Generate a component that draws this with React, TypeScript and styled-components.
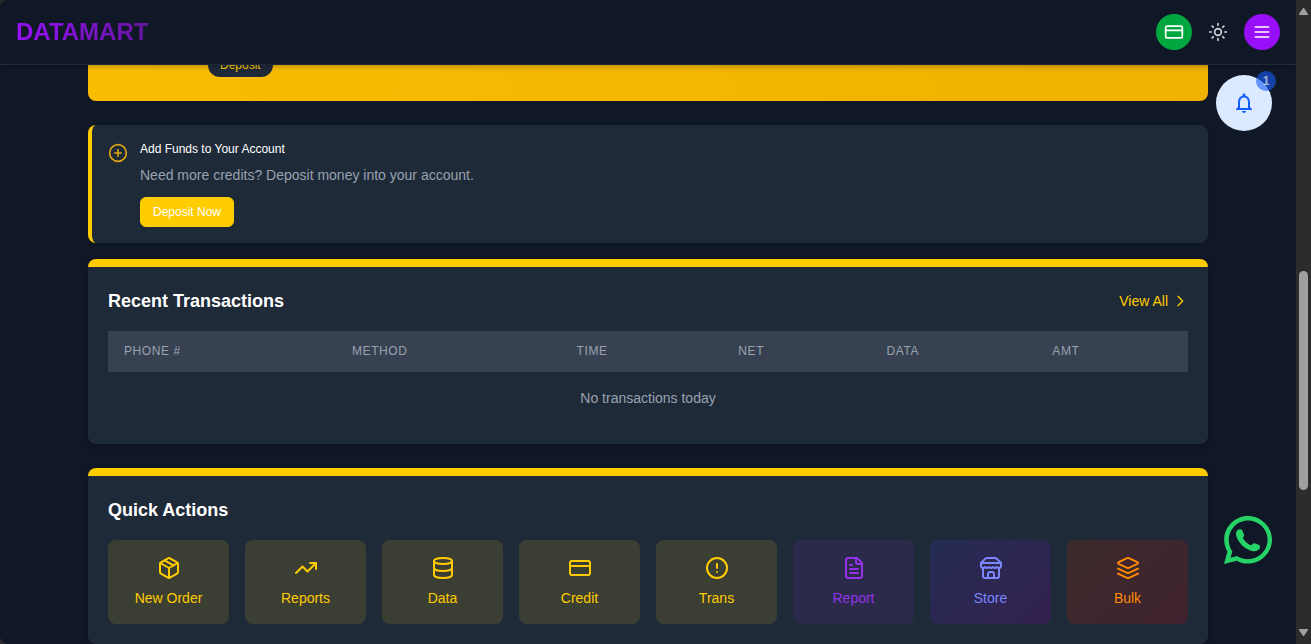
import React from "react";
import type { ReactNode } from "react";
import styled, { createGlobalStyle } from "styled-components";
import {
  CircleAlert,
  CirclePlus,
  CreditCard,
  Database,
  Package,
  Sun,
  TrendingUp,
} from "lucide-react";

const GlobalStyle = createGlobalStyle`
  *, *::before, *::after { box-sizing: border-box; }
  body {
    margin: 0;
    background: #2c2c2c;
    color: #ffffff;
    font-family: "Liberation Sans", Arial, sans-serif;
    font-size: 14px;
    line-height: 20px;
  }
  h1, h2, h3, p { margin: 0; }
  button { font-family: inherit; cursor: pointer; }
  a { color: inherit; text-decoration: none; }
`;

const Shell = styled.div`
  display: grid;
  grid-template-columns: minmax(0, 1fr) 15px;
  height: 100vh;
  overflow: hidden;
`;

const Page = styled.div`
  position: relative;
  display: flex;
  flex-direction: column;
  min-height: 0;
  overflow: hidden;
  background: #101726;
  border-radius: 8px 0 0 8px;
`;

const Header = styled.header`
  position: relative;
  z-index: 2;
  flex: none;
  display: flex;
  align-items: center;
  justify-content: space-between;
  padding: 14px 16px;
  background: #101726;
  border-bottom: 1px solid #1e2939;
  box-shadow: 0 1px 6px rgba(0, 0, 0, 0.3);
`;

const Brand = styled.h1`
  font-size: 24px;
  line-height: 32px;
  font-weight: 700;
  color: transparent;
  background: linear-gradient(90deg, #9810fa, #6516a0);
  background-clip: text;
  -webkit-background-clip: text;
`;

const HeaderActions = styled.div`
  display: flex;
  align-items: center;
  gap: 8px;
`;

const RoundButton = styled.button<{ $fill?: string; $color?: string }>`
  display: grid;
  place-items: center;
  width: 36px;
  height: 36px;
  padding: 0;
  border: 0;
  border-radius: 50%;
  background: ${(p) => p.$fill ?? "transparent"};
  color: ${(p) => p.$color ?? "#ffffff"};
`;

const Content = styled.main`
  flex: 1;
  min-height: 0;
  width: 100%;
  max-width: 1152px;
  margin: 0 auto;
  padding: 0 16px;
`;

const Banner = styled.section`
  display: flex;
  align-items: flex-end;
  height: 36px;
  margin-bottom: 24px;
  padding: 0 120px 24px;
  border-radius: 0 0 8px 8px;
  background: linear-gradient(110deg, #fabd02, #f0b100);
  overflow: hidden;
`;

const BannerButton = styled.button`
  flex: none;
  padding: 4px 12px;
  border: 0;
  border-radius: 12px;
  background: #1e2939;
  color: #ffcc00;
  font-size: 12px;
  line-height: 16px;
`;

const Notice = styled.section`
  display: flex;
  gap: 12px;
  margin-bottom: 16px;
  padding: 16px;
  border-left: 4px solid #ffcc00;
  border-radius: 8px;
  background: #1f2a39;
  box-shadow: 0 1px 3px rgba(0, 0, 0, 0.2);
`;

const NoticeIcon = styled(CirclePlus)`
  flex: none;
  margin-top: 2px;
  color: #dba511;
`;

const NoticeTitle = styled.h3`
  font-size: 12px;
  line-height: 16px;
  font-weight: 500;
`;

const NoticeText = styled.p`
  margin: 8px 0 12px;
  color: #99a1af;
`;

const DepositButton = styled.button`
  display: block;
  padding: 6px 12px;
  border: 1px solid #ffcc00;
  border-radius: 6px;
  background: #ffcc00;
  color: #ffffff;
  font-size: 12px;
  line-height: 16px;
  font-weight: 500;
`;

const Card = styled.section`
  margin-bottom: 24px;
  padding: 28px 20px 20px;
  border-radius: 8px;
  background: linear-gradient(#ffcc00 0 8px, #1f2a39 8px);
  box-shadow: 0 2px 6px rgba(0, 0, 0, 0.2);
`;

const CardHeader = styled.div`
  display: flex;
  align-items: center;
  justify-content: space-between;
  margin-bottom: 16px;
`;

const CardTitle = styled.h2`
  font-size: 18px;
  line-height: 28px;
  font-weight: 700;
`;

const ViewAll = styled.a`
  display: flex;
  align-items: center;
  gap: 4px;
  color: #ffcc00;
`;

const Table = styled.table`
  width: 100%;
  border-collapse: collapse;
`;

const HeadRow = styled.tr`
  background: #374151;
  border-bottom: 1px solid #374151;
`;

const HeadCell = styled.th`
  padding: 12px 16px;
  color: #99a1af;
  font-size: 12px;
  line-height: 16px;
  font-weight: 500;
  letter-spacing: 0.05em;
  text-align: left;
  text-transform: uppercase;
`;

const EmptyCell = styled.td`
  padding: 16px;
  color: #99a1af;
  text-align: center;
`;

const ActionGrid = styled.div`
  display: grid;
  grid-template-columns: repeat(8, minmax(0, 1fr));
  gap: 16px;
`;

const ActionTile = styled.button<{ $fill: string; $color: string }>`
  display: flex;
  flex-direction: column;
  align-items: center;
  gap: 8px;
  padding: 16px;
  border: 0;
  border-radius: 8px;
  background: ${(p) => p.$fill};
  color: ${(p) => p.$color};
  font-size: 14px;
  line-height: 20px;
  font-weight: 500;
  white-space: nowrap;
`;

const Notifications = styled.button`
  position: absolute;
  z-index: 3;
  top: 75px;
  right: 24px;
  display: grid;
  place-items: center;
  width: 56px;
  height: 56px;
  padding: 0;
  border: 0;
  border-radius: 50%;
  background: #dbeafe;
  color: #155dfc;
`;

const Count = styled.span`
  position: absolute;
  top: -4px;
  right: -4px;
  width: 20px;
  height: 20px;
  border-radius: 50%;
  background: rgba(21, 93, 252, 0.6);
  color: rgba(255, 255, 255, 0.6);
  font-size: 12px;
  line-height: 20px;
  font-weight: 700;
  text-align: center;
`;

const ChatLink = styled.a`
  position: absolute;
  right: 24px;
  bottom: 80px;
  display: block;
  width: 48px;
  height: 48px;
  color: #25d366;
`;

const Scrollbar = styled.div`
  display: flex;
  flex-direction: column;
  align-items: center;
  padding: 8px 0;
  background: #2c2c2c;
`;

const Track = styled.div`
  flex: 1;
  display: flex;
  flex-direction: column;
  align-items: center;
`;

const Gap = styled.div<{ $grow: number }>`
  flex: ${(p) => p.$grow} 1 0;
`;

const Thumb = styled.div`
  flex: 219 1 0;
  width: 9px;
  border-radius: 5px;
  background: #9f9f9f;
`;

const Arrow = styled.svg`
  display: block;
  width: 9px;
  height: 7px;
  fill: #9f9f9f;
`;

function LineIcon({ size, children }: { size: number; children: ReactNode }) {
  return (
    <svg
      width={size}
      height={size}
      viewBox="0 0 24 24"
      fill="none"
      stroke="currentColor"
      strokeWidth={2}
      strokeLinecap="round"
      strokeLinejoin="round"
      aria-hidden="true"
    >
      {children}
    </svg>
  );
}

const MenuIcon = () => (
  <LineIcon size={20}>
    <path d="M4 6h16M4 12h16M4 18h16" />
  </LineIcon>
);

const ChevronIcon = () => (
  <LineIcon size={16}>
    <path d="M9 5l7 7-7 7" />
  </LineIcon>
);

const ReportIcon = () => (
  <LineIcon size={24}>
    <path d="M15 2H6a2 2 0 0 0-2 2v16a2 2 0 0 0 2 2h12a2 2 0 0 0 2-2V7Z" />
    <path d="M14 2v4a2 2 0 0 0 2 2h4" />
    <path d="M10 9H8M16 13H8M16 17H8" />
  </LineIcon>
);

const StoreIcon = () => (
  <LineIcon size={24}>
    <path d="m2 7 4.410-4.410A2 2 0 0 1 7.830 2h8.340a2 2 0 0 1 1.420.590L22 7" />
    <path d="M4 12v8a2 2 0 0 0 2 2h12a2 2 0 0 0 2-2v-8" />
    <path d="M15 22v-4a2 2 0 0 0-2-2h-2a2 2 0 0 0-2 2v4" />
    <path d="M2 7h20" />
    <path d="M22 7v3a2 2 0 0 1-2 2a2.700 2.700 0 0 1-1.590-.63.7.7 0 0 0-.82 0A2.700 2.700 0 0 1 16 12a2.700 2.700 0 0 1-1.590-.63.7.7 0 0 0-.82 0A2.700 2.700 0 0 1 12 12a2.700 2.700 0 0 1-1.590-.63.7.7 0 0 0-.82 0A2.700 2.700 0 0 1 8 12a2.700 2.700 0 0 1-1.590-.63.7.7 0 0 0-.82 0A2.700 2.700 0 0 1 4 12a2 2 0 0 1-2-2V7" />
  </LineIcon>
);

const LayersIcon = () => (
  <LineIcon size={24}>
    <path d="m12.830 2.180a2 2 0 0 0-1.660 0L2.600 6.080a1 1 0 0 0 0 1.830l8.580 3.910a2 2 0 0 0 1.660 0l8.580-3.900a1 1 0 0 0 0-1.830Z" />
    <path d="m22 17.650-9.170 4.160a2 2 0 0 1-1.660 0L2 17.650" />
    <path d="m22 12.650-9.170 4.160a2 2 0 0 1-1.660 0L2 12.650" />
  </LineIcon>
);

const BellIcon = () => (
  <svg width="24" height="24" viewBox="0 0 24 24" fill="currentColor" aria-hidden="true">
    <path d="M12 22c1.100 0 2-.9 2-2h-4c0 1.100.9 2 2 2zm6-6v-5c0-3.070-1.630-5.640-4.500-6.320V4c0-.83-.67-1.500-1.500-1.500s-1.500.67-1.500 1.500v.68C7.640 5.360 6 7.920 6 11v5l-2 2v1h16v-1l-2-2zm-2 1H8v-6c0-2.480 1.510-4.500 4-4.500s4 2.020 4 4.500v6z" />
  </svg>
);

const WhatsAppIcon = () => (
  <svg viewBox="0 0 48 48" width="48" height="48" fill="currentColor" aria-hidden="true">
    <path
      fillRule="evenodd"
      d="M40.800 7C36.300 2.500 30.400 0 24 0 10.900 0 .2 10.700.2 23.800c0 4.200 1.100 8.300 3.200 11.900L0 48l12.600-3.300c3.500 1.900 7.400 2.900 11.400 2.900C37.100 47.600 48 36.900 48 23.800 48 17.400 45.300 11.500 40.800 7zM24 43.200c-3.600 0-7-.9-10.100-2.700l-.7-.4-6.700 1.700 1.900-6.400-.6-.8c-2-3.100-3-6.800-3-10.600C4.800 13.200 13.400 4.400 24 4.400c5.200 0 10.100 2 13.800 5.700 3.700 3.700 5.800 8.500 5.800 13.700C43.600 34.500 34.800 43.200 24 43.200z"
    />
    <path d="M13.500 14C15 13 17.500 13 18.300 14.500L20 18.500C20.500 20 19.500 21 18.800 22C20.500 25 23.500 28 27 29.500L28.800 27.700C29.500 27 30.500 27 31.300 27.400L35 29C36.500 29.800 36.300 31.500 35.500 32.800C34 35 31 35.700 28 35C20.500 33 14.500 27 12.300 20C11.700 17.500 12 15.300 13.500 14Z" />
  </svg>
);

const columns = ["Phone #", "Method", "Time", "Net", "Data", "Amt"];

const yellow = { fill: "#3b3e32", color: "#ffcc00" };

const actions: { label: string; icon: ReactNode; fill: string; color: string }[] = [
  { label: "New Order", icon: <Package size={24} />, ...yellow },
  { label: "Reports", icon: <TrendingUp size={24} />, ...yellow },
  { label: "Data", icon: <Database size={24} />, ...yellow },
  { label: "Credit", icon: <CreditCard size={24} />, ...yellow },
  { label: "Trans", icon: <CircleAlert size={24} />, ...yellow },
  { label: "Report", icon: <ReportIcon />, fill: "#2b2a4a", color: "#9333ea" },
  {
    label: "Store",
    icon: <StoreIcon />,
    fill: "linear-gradient(135deg, #252c54, #33214f)",
    color: "#7c86ff",
  },
  {
    label: "Bulk",
    icon: <LayersIcon />,
    fill: "linear-gradient(135deg, #3d2b2b, #3f222f)",
    color: "#ff8904",
  },
];

export default function App() {
  return (
    <>
      <GlobalStyle />
      <Shell>
        <Page>
          <Header>
            <Brand>DATAMART</Brand>
            <HeaderActions>
              <RoundButton $fill="#00a63e" aria-label="Wallet">
                <CreditCard size={20} />
              </RoundButton>
              <RoundButton $color="#d1d5dc" aria-label="Toggle theme">
                <Sun size={20} />
              </RoundButton>
              <RoundButton $fill="#9810fa" aria-label="Open menu">
                <MenuIcon />
              </RoundButton>
            </HeaderActions>
          </Header>

          <Content>
            <Banner>
              <BannerButton>Deposit</BannerButton>
            </Banner>

            <Notice>
              <NoticeIcon size={20} />
              <div>
                <NoticeTitle>Add Funds to Your Account</NoticeTitle>
                <NoticeText>Need more credits? Deposit money into your account.</NoticeText>
                <DepositButton>Deposit Now</DepositButton>
              </div>
            </Notice>

            <Card>
              <CardHeader>
                <CardTitle>Recent Transactions</CardTitle>
                <ViewAll href="#transactions">
                  View All
                  <ChevronIcon />
                </ViewAll>
              </CardHeader>
              <Table>
                <thead>
                  <HeadRow>
                    {columns.map((name) => (
                      <HeadCell key={name} scope="col">
                        {name}
                      </HeadCell>
                    ))}
                  </HeadRow>
                </thead>
                <tbody>
                  <tr>
                    <EmptyCell colSpan={columns.length}>No transactions today</EmptyCell>
                  </tr>
                </tbody>
              </Table>
            </Card>

            <Card>
              <CardHeader>
                <CardTitle>Quick Actions</CardTitle>
              </CardHeader>
              <ActionGrid>
                {actions.map(({ label, icon, fill, color }) => (
                  <ActionTile key={label} $fill={fill} $color={color}>
                    {icon}
                    {label}
                  </ActionTile>
                ))}
              </ActionGrid>
            </Card>
          </Content>

          <Notifications aria-label="Notifications">
            <BellIcon />
            <Count>1</Count>
          </Notifications>

          <ChatLink href="#chat" aria-label="Chat on WhatsApp">
            <WhatsAppIcon />
          </ChatLink>
        </Page>

        <Scrollbar aria-hidden="true">
          <Arrow viewBox="0 0 9 7">
            <path d="M4 0h1l4 6v1H0V6z" />
          </Arrow>
          <Track>
            <Gap $grow={256} />
            <Thumb />
            <Gap $grow={139} />
          </Track>
          <Arrow viewBox="0 0 9 7">
            <path d="M4 7h1l4-6V0H0v1z" />
          </Arrow>
        </Scrollbar>
      </Shell>
    </>
  );
}
